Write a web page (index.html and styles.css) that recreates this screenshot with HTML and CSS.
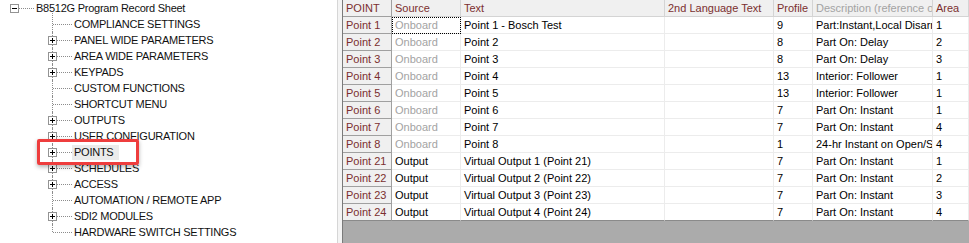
FILE: index.html
```html
<!DOCTYPE html>
<html lang="en">
<head>
  <meta charset="UTF-8">
  <title>B8512G Program Record Sheet - Points</title>
  <link rel="stylesheet" href="styles.css">
</head>
<body>

<div class="window">
  <div class="tree-pane">
    <div class="node root">
      <span class="box minus"></span>
      <span class="hline"></span>
      <span class="label">B8512G Program Record Sheet</span>
    </div>
    <div class="children">
      <div class="node"><span class="hline long"></span><span class="label">COMPLIANCE SETTINGS</span></div>
      <div class="node"><span class="box"></span><span class="hline"></span><span class="label">PANEL WIDE PARAMETERS</span></div>
      <div class="node"><span class="box"></span><span class="hline"></span><span class="label">AREA WIDE PARAMETERS</span></div>
      <div class="node"><span class="box"></span><span class="hline"></span><span class="label">KEYPADS</span></div>
      <div class="node"><span class="hline long"></span><span class="label">CUSTOM FUNCTIONS</span></div>
      <div class="node"><span class="hline long"></span><span class="label">SHORTCUT MENU</span></div>
      <div class="node"><span class="box"></span><span class="hline"></span><span class="label">OUTPUTS</span></div>
      <div class="node"><span class="box"></span><span class="hline"></span><span class="label">USER CONFIGURATION</span></div>
      <div class="node selected"><span class="box"></span><span class="hline"></span><span class="label">POINTS</span><span class="callout"></span></div>
      <div class="node"><span class="box"></span><span class="hline"></span><span class="label">SCHEDULES</span></div>
      <div class="node"><span class="box"></span><span class="hline"></span><span class="label">ACCESS</span></div>
      <div class="node"><span class="hline long"></span><span class="label">AUTOMATION / REMOTE APP</span></div>
      <div class="node"><span class="box"></span><span class="hline"></span><span class="label">SDI2 MODULES</span></div>
      <div class="node"><span class="hline long"></span><span class="label">HARDWARE SWITCH SETTINGS</span></div>
    </div>
  </div>

  <div class="splitter"></div>

  <div class="grid-pane">
    <div class="grid-row head">
      <div class="cell rowhead">POINT</div>
      <div class="cell">Source</div>
      <div class="cell">Text</div>
      <div class="cell">2nd Language Text</div>
      <div class="cell">Profile</div>
      <div class="cell muted">Description (reference o</div>
      <div class="cell">Area</div>
    </div>
    <div id="grid-body"></div>
  </div>
</div>

<script>
  var points = [
    ['Point 1', 'Onboard', 'Point 1 - Bosch Test', 9, 'Part:Instant,Local Disarr', 1],
    ['Point 2', 'Onboard', 'Point 2', 8, 'Part On: Delay', 2],
    ['Point 3', 'Onboard', 'Point 3', 8, 'Part On: Delay', 3],
    ['Point 4', 'Onboard', 'Point 4', 13, 'Interior: Follower', 1],
    ['Point 5', 'Onboard', 'Point 5', 13, 'Interior: Follower', 1],
    ['Point 6', 'Onboard', 'Point 6', 7, 'Part On: Instant', 1],
    ['Point 7', 'Onboard', 'Point 7', 7, 'Part On: Instant', 4],
    ['Point 8', 'Onboard', 'Point 8', 1, '24-hr Instant on Open/S', 4],
    ['Point 21', 'Output', 'Virtual Output 1 (Point 21)', 7, 'Part On: Instant', 1],
    ['Point 22', 'Output', 'Virtual Output 2 (Point 22)', 7, 'Part On: Instant', 2],
    ['Point 23', 'Output', 'Virtual Output 3 (Point 23)', 7, 'Part On: Instant', 3],
    ['Point 24', 'Output', 'Virtual Output 4 (Point 24)', 7, 'Part On: Instant', 4]
  ];

  var body = document.getElementById('grid-body');
  points.forEach(function (p, i) {
    var row = document.createElement('div');
    row.className = 'grid-row';
    var srcClass = p[1] === 'Onboard' ? 'cell muted' : 'cell';
    if (i === 0) srcClass += ' focused';
    row.innerHTML =
      '<div class="cell rowhead">' + p[0] + '</div>' +
      '<div class="' + srcClass + '">' + p[1] + '</div>' +
      '<div class="cell">' + p[2] + '</div>' +
      '<div class="cell"></div>' +
      '<div class="cell">' + p[3] + '</div>' +
      '<div class="cell">' + p[4] + '</div>' +
      '<div class="cell">' + p[5] + '</div>';
    body.appendChild(row);
  });
</script>

</body>
</html>
```

FILE: styles.css
```css
body {
  margin: 0;
  font-family: "Liberation Sans", Arial, sans-serif;
  font-size: 11px;
  background-color: #fff;
  color: #000;
}

.window {
  display: flex;
  height: 243px;
  overflow: hidden;
}

/* ---- tree ---- */

.tree-pane {
  width: 337px;
  flex: none;
  background-color: #fff;
  border-right: 1px solid #d6d6d6;
  position: relative;
}

.node {
  display: flex;
  align-items: center;
  height: 16px;
  position: relative;
  white-space: nowrap;
}

.root {
  padding-left: 10px;
}

.children {
  margin-left: 48px;
}

.children .node::before {
  content: "";
  position: absolute;
  left: 4px;
  top: 0;
  bottom: 0;
  border-left: 1px dotted #8c8c8c;
}

.children .node:first-child::before {
  top: -3px;
}

.children .node:last-child::before {
  bottom: 8px;
}

.box {
  width: 7px;
  height: 7px;
  border: 1px solid #939393;
  background:
    linear-gradient(#000, #000) center / 5px 1px no-repeat,
    linear-gradient(#000, #000) center / 1px 5px no-repeat,
    #fff;
  position: relative;
  z-index: 1;
  flex: none;
}

.box.minus {
  background:
    linear-gradient(#000, #000) center / 5px 1px no-repeat,
    #fff;
}

.hline {
  width: 15px;
  border-top: 1px dotted #8c8c8c;
  flex: none;
}

.hline.long {
  width: 19px;
  margin-left: 5px;
}

.label {
  padding: 0 2px;
  line-height: 15px;
  font-size: 11px;
  letter-spacing: -0.25px;
  color: #111;
}

.selected .label {
  background-color: #ebebeb;
  padding-right: 6px;
}

.callout {
  position: absolute;
  left: -11px;
  top: -5px;
  width: 96px;
  height: 20px;
  border: 3px solid #ee3d3d;
  border-radius: 2px;
  box-shadow: 0 2px 4px rgba(0, 0, 0, 0.3);
  z-index: 2;
}

/* ---- grid ---- */

.splitter {
  width: 4px;
  flex: none;
  background-color: #f4f4f4;
}

.grid-pane {
  flex: 1;
  background-color: #ababab;
  border-left: 1px solid #7a7a7a;
  min-width: 0;
}

.grid-row {
  display: grid;
  grid-template-columns: 49px 69px 204px 109px 39px 120px 1fr;
  background-color: #fff;
}

.grid-row:last-child .cell {
  border-bottom-color: #8a8a8a;
}

.cell {
  height: 16px;
  line-height: 16px;
  padding: 0 3px;
  border-right: 1px solid #ececec;
  border-bottom: 1px solid #ececec;
  white-space: nowrap;
  overflow: hidden;
  text-overflow: clip;
}

.head .cell {
  background-color: #f0f0f0;
  color: #7b2f2f;
  border-right-color: #d4d4d4;
  border-bottom-color: #d4d4d4;
}

.cell.rowhead {
  background-color: #f0f0f0;
  color: #7b2f2f;
  border-right-color: #a0a0a0;
  border-bottom-color: #a0a0a0;
}

.cell.muted,
.head .cell.muted {
  color: #a3a3a3;
}

.cell.focused {
  outline: 1px dotted #000;
  outline-offset: -1px;
}
```
